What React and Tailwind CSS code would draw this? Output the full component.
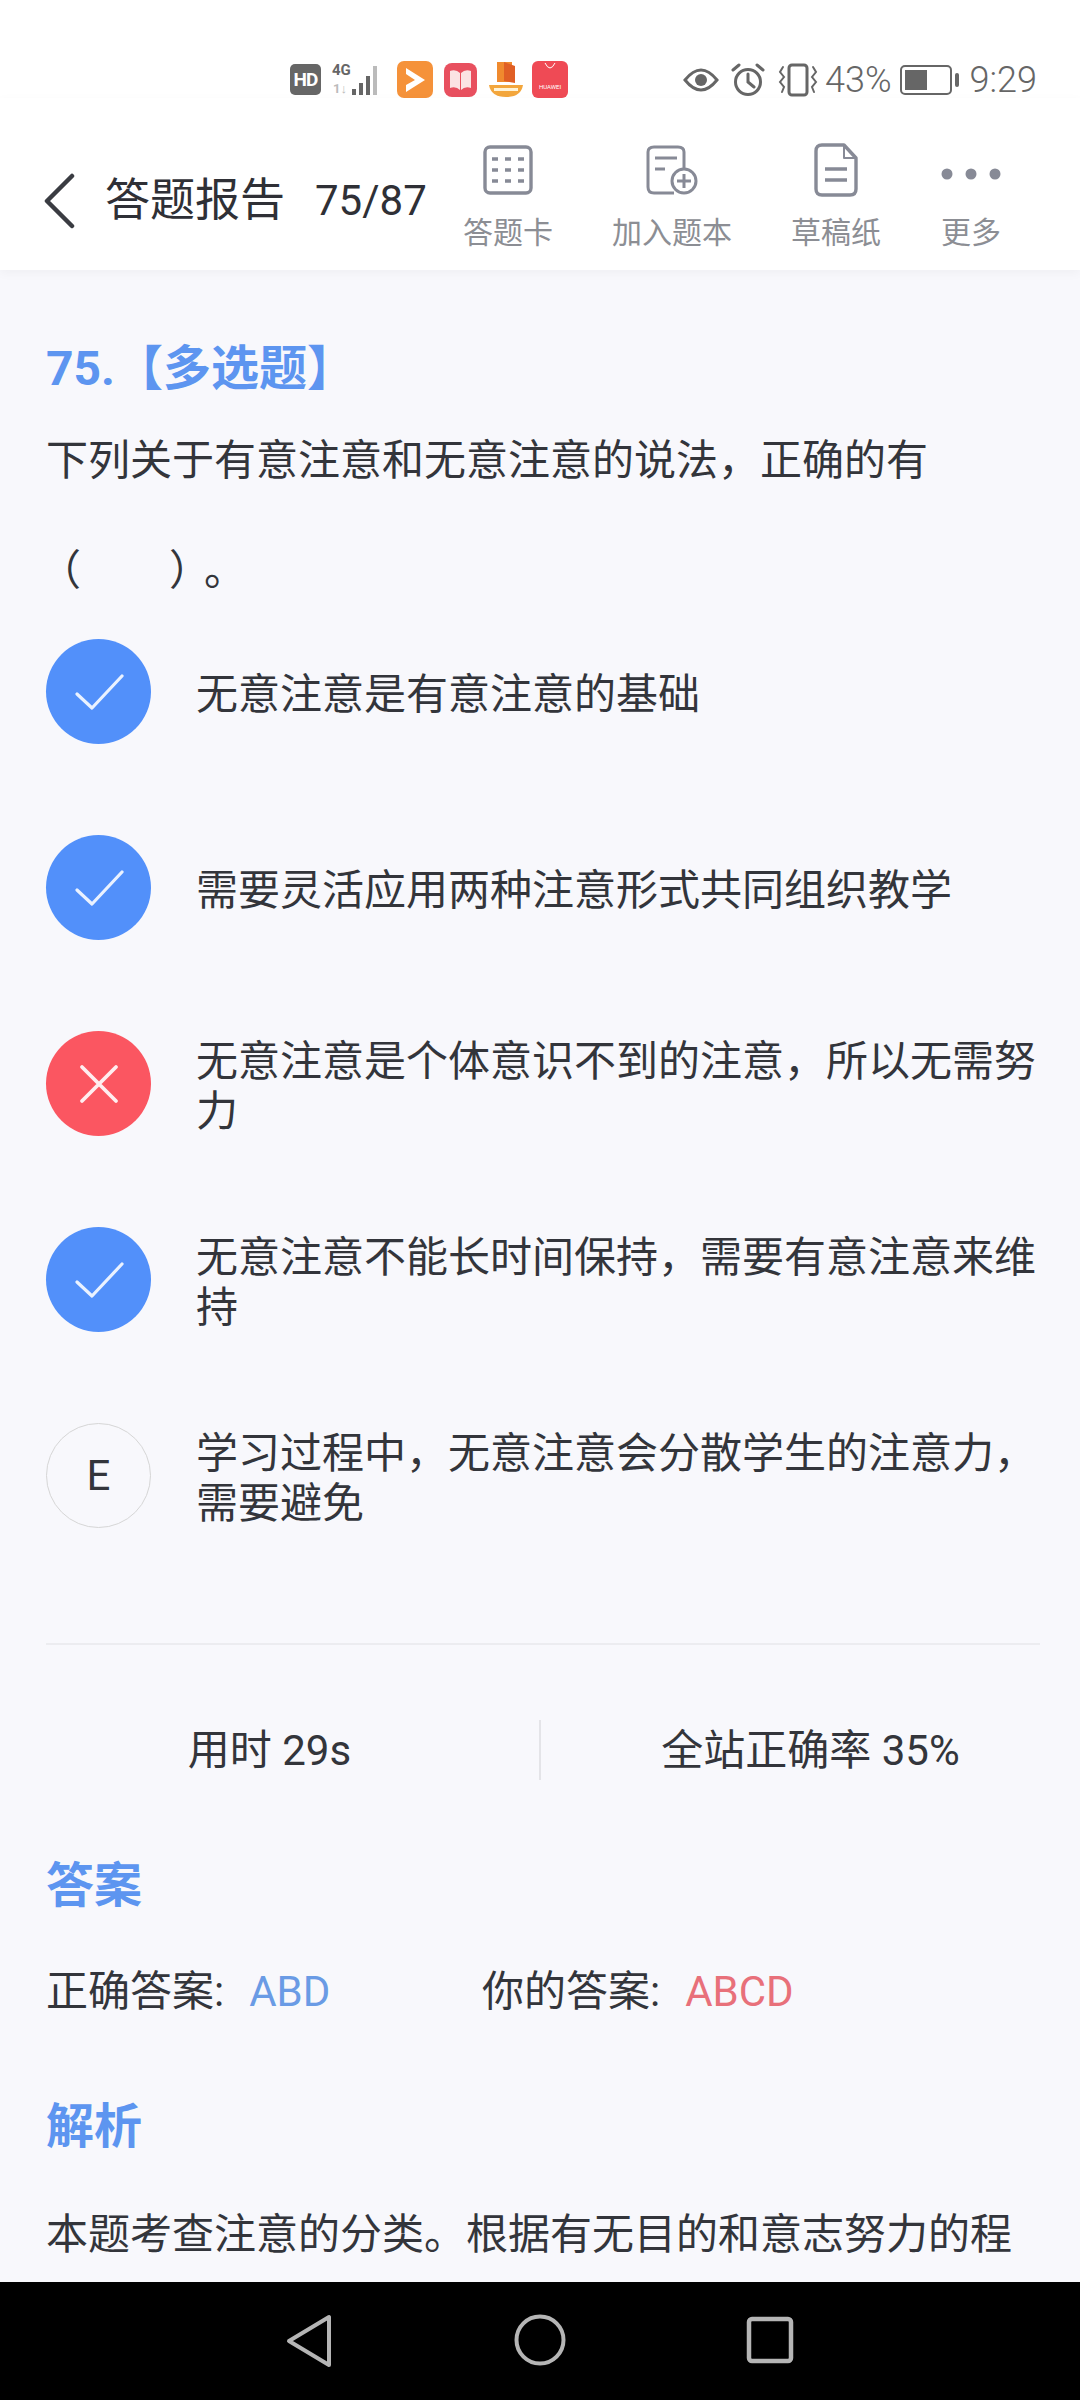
const Check = () => (
  <svg width="50" height="40" viewBox="0 0 50 40" fill="none" stroke="#eaf2ff" strokeWidth="3.2" strokeLinecap="round" strokeLinejoin="round">
    <path d="M3 22 L18 36 L48 4" />
  </svg>
);
const Cross = () => (
  <svg width="40" height="40" viewBox="0 0 40 40" fill="none" stroke="#ffeef0" strokeWidth="3.8" strokeLinecap="round">
    <path d="M3 3 L37 37 M37 3 L3 37" />
  </svg>
);

const options = [
  { kind: "ok", text: "无意注意是有意注意的基础" },
  { kind: "ok", text: "需要灵活应用两种注意形式共同组织教学" },
  { kind: "bad", text: "无意注意是个体意识不到的注意，所以无需努力" },
  { kind: "ok", text: "无意注意不能长时间保持，需要有意注意来维持" },
  { kind: "none", text: "学习过程中，无意注意会分散学生的注意力，需要避免" },
];

function StatusBar() {
  return (
    <div className="h-[98px] pt-[61px] flex items-start bg-white pl-[290px] pr-[43px] text-[#666666]">
      <div className="flex items-center h-[37px]">
        <div className="w-[31px] h-[31px] rounded-[5px] bg-[#666666] flex items-center justify-center text-white text-[19px] font-bold leading-none tracking-[-1px]">HD</div>
        <svg className="ml-[11px]" width="54" height="36" viewBox="0 0 54 36">
          <text x="0" y="13" fontSize="15" fontWeight="700" fill="#666" fontFamily="Roboto, sans-serif">4G</text>
          <text x="1" y="31" fontSize="13" fontWeight="700" fill="#bbb" fontFamily="Roboto, sans-serif">1↓</text>
          <rect x="20" y="27" width="4" height="6" fill="#666" />
          <rect x="27" y="21" width="4" height="12" fill="#666" />
          <rect x="34" y="14" width="4" height="19" fill="#666" />
          <rect x="41" y="4" width="4" height="29" fill="#bbb" />
        </svg>
        <svg className="ml-[11px]" width="36" height="37" viewBox="0 0 36 37">
          <rect width="36" height="37" rx="7" fill="#f5923a" />
          <path d="M9 7 L28 19 L9 31 L9 24 L18 19 L9 13 Z" fill="#fff" />
        </svg>
        <svg className="ml-[11px]" width="33" height="34" viewBox="0 0 33 34">
          <rect width="33" height="34" rx="8" fill="#e8505f" />
          <path d="M6 8 Q12 6 16 10 L16 27 Q12 23 6 25 Z M27 8 Q21 6 17 10 L17 27 Q21 23 27 25 Z" fill="#fbe3e3" />
        </svg>
        <svg className="ml-[12px]" width="34" height="37" viewBox="0 0 34 37">
          <rect x="8" y="1" width="15" height="20" fill="#f08a2e" />
          <path d="M15 1 L26 5 L26 22 L15 20 Z" fill="#e05f25" />
          <path d="M0 24 L34 24 Q32 36 17 36 Q2 36 0 24 Z" fill="#f3a63c" />
          <rect x="5" y="27" width="24" height="3" fill="#fff3d6" />
        </svg>
        <div className="ml-[9px] w-[36px] h-[37px] rounded-[6px] bg-[#ef4a55] flex flex-col items-center justify-end pb-[8px] text-white text-[6px] leading-none relative">
          <svg className="absolute top-0" width="14" height="10" viewBox="0 0 14 10" fill="none" stroke="#fff" strokeWidth="1">
            <path d="M2 2 Q7 12 12 2" />
          </svg>
          <span>HUAWEI</span>
        </div>
      </div>
      <div className="ml-auto flex items-center h-[37px]">
        <svg width="36" height="26" viewBox="0 0 36 26" fill="none" stroke="#666" strokeWidth="3">
          <path d="M2 13 Q18 -7 34 13 Q18 33 2 13 Z" />
          <circle cx="18" cy="13" r="6" fill="#666" stroke="none" />
        </svg>
        <svg className="ml-[12px]" width="34" height="34" viewBox="0 0 34 34" fill="none" stroke="#666" strokeWidth="3" strokeLinecap="round">
          <circle cx="17" cy="19" r="12.5" />
          <path d="M17 11 V19 L23 24 M2 7 L8 2 M32 7 L26 2" />
        </svg>
        <svg className="ml-[13px]" width="40" height="34" viewBox="0 0 40 34" fill="none" stroke="#666" strokeWidth="3" strokeLinecap="round">
          <rect x="11" y="2" width="18" height="30" rx="3" />
          <path d="M5 4 L2 9 L6 14 L2 19 L6 24 L4 29 M35 4 L38 9 L34 14 L38 19 L34 24 L36 29" strokeWidth="2" />
        </svg>
        <span className="ml-[7px] text-[36px] leading-none font-light">43%</span>
        <svg className="ml-[8px]" width="60" height="30" viewBox="0 0 60 30">
          <rect x="1" y="1" width="50" height="28" rx="4" fill="none" stroke="#666" strokeWidth="2" />
          <rect x="5" y="5" width="22" height="20" fill="#666" />
          <rect x="55" y="8" width="4" height="14" rx="2" fill="#666" />
        </svg>
        <span className="ml-[10px] text-[36px] leading-none font-light">9:29</span>
      </div>
    </div>
  );
}

function Tool({ icon, label }) {
  return (
    <div className="flex flex-col items-center">
      <div className="h-[56px] flex items-center justify-center">{icon}</div>
      <div className="mt-[18px] text-[30px] leading-[34px] text-[#8c8e94]">{label}</div>
    </div>
  );
}

function Header() {
  return (
    <div className="relative z-10 h-[172px] bg-white flex items-start justify-between pl-[43px] pr-[78px] shadow-[0_3px_10px_rgba(0,0,0,0.04)]">
      <div className="flex items-center mt-[73px]">
        <svg width="32" height="56" viewBox="0 0 32 56" fill="none" stroke="#3a3c42" strokeWidth="4.5" strokeLinecap="round" strokeLinejoin="round">
          <path d="M29 3 L4 28 L29 53" />
        </svg>
        <span className="ml-[30px] text-[45px] leading-[60px] text-[#2f3036]">答题报告</span>
        <span className="ml-[30px] text-[42px] leading-[60px] text-[#2f3036]">75/87</span>
      </div>
      <div className="flex items-start gap-[59px] mt-[44px]">
        <Tool
          label="答题卡"
          icon={
            <svg width="50" height="50" viewBox="0 0 50 50" fill="none" stroke="#878a96" strokeWidth="3.4">
              <rect x="2" y="2" width="46" height="46" rx="5" />
              <path d="M9 14 H15 M22 14 H28 M35 14 H41 M9 25 H15 M22 25 H28 M35 25 H41 M9 36 H15 M22 36 H28 M35 36 H41" />
            </svg>
          }
        />
        <Tool
          label="加入题本"
          icon={
            <svg width="52" height="50" viewBox="0 0 52 50" fill="none" stroke="#878a96" strokeWidth="3">
              <path d="M28 48 H8 Q2 48 2 42 V7 Q2 2 8 2 H32 Q38 2 38 7 V24" />
              <path d="M9 13 H31 M9 24 H19" />
              <circle cx="38" cy="36" r="12" />
              <path d="M38 29 V43 M31 36 H45" />
            </svg>
          }
        />
        <Tool
          label="草稿纸"
          icon={
            <svg width="44" height="54" viewBox="0 0 44 54" fill="none" stroke="#878a96" strokeWidth="3.4" strokeLinejoin="round">
              <path d="M8 2 H30 L42 15 V46 Q42 52 36 52 H8 Q2 52 2 46 V8 Q2 2 8 2 Z" />
              <path d="M30 2 V15 H42" strokeWidth="2" />
              <path d="M11 26 H33 M11 37 H33" />
            </svg>
          }
        />
        <Tool
          label="更多"
          icon={
            <svg className="mt-[8px]" width="62" height="14" viewBox="0 0 62 14" fill="#878a96">
              <circle cx="7" cy="7" r="5.5" />
              <circle cx="31" cy="7" r="5.5" />
              <circle cx="55" cy="7" r="5.5" />
            </svg>
          }
        />
      </div>
    </div>
  );
}

function Option({ kind, text }) {
  const mark =
    kind === "ok" ? (
      <div className="w-[105px] h-[105px] rounded-full bg-[#5290fa] flex items-center justify-center"><Check /></div>
    ) : kind === "bad" ? (
      <div className="w-[105px] h-[105px] rounded-full bg-[#fb5661] flex items-center justify-center"><Cross /></div>
    ) : (
      <div className="w-[105px] h-[105px] rounded-full border-[1.5px] border-[#d6d6d6] flex items-center justify-center text-[42px] text-[#33353b]">E</div>
    );
  return (
    <div className="flex items-center h-[105px]">
      <div className="shrink-0">{mark}</div>
      <div className="ml-[45px] pt-[6px] flex-1 text-[42px] leading-[50px] text-[#33353b]">{text}</div>
    </div>
  );
}

export default function App() {
  return (
    <div
      className="w-[1080px] h-[2400px] flex flex-col overflow-hidden bg-[#f8f8fc]"
      style={{ fontFamily: 'Roboto, "Noto Sans CJK SC", sans-serif' }}
    >
      <StatusBar />
      <Header />
      <main className="flex-1 overflow-hidden pl-[46px] pr-[38px]">
        <h1 className="mt-[66px] text-[48px] leading-[66px] font-bold text-[#5d95f0]">75.【多选题】</h1>
        <p className="mt-[34px] text-[42px] leading-[50px] text-[#33353b]">下列关于有意注意和无意注意的说法，正确的有</p>
        <p className="mt-[60px] -ml-[7px] text-[42px] leading-[50px] text-[#33353b]">（<span className="inline-block w-[88px]" />）<span className="ml-[14px]">。</span></p>
        <div className="mt-[43px] flex flex-col gap-[91px]">
          {options.map((o) => (
            <Option key={o.text} {...o} />
          ))}
        </div>
        <div className="mt-[115px] h-[2px] bg-[#ececf0] w-[994px]" />
        <div className="mt-[74px] -ml-[46px] w-[1080px] flex items-center h-[62px] text-[42px] text-[#33353b]">
          <div className="flex-1 text-center">用时 29s</div>
          <div className="w-[2px] h-[60px] bg-[#e4e4e8]" />
          <div className="flex-1 text-center">全站正确率 35%</div>
        </div>
        <h2 className="mt-[72px] text-[48px] leading-[66px] font-bold text-[#5d95f0]">答案</h2>
        <div className="mt-[48px] flex items-center text-[42px] leading-[50px] text-[#33353b]">
          <div className="w-[436px] flex items-center">
            <span>正确答案:</span>
            <span className="ml-[25px] text-[#6a9be5]">ABD</span>
          </div>
          <div className="flex items-center">
            <span>你的答案:</span>
            <span className="ml-[25px] text-[#e8707a]">ABCD</span>
          </div>
        </div>
        <h2 className="mt-[77px] text-[48px] leading-[66px] font-bold text-[#5d95f0]">解析</h2>
        <p className="mt-[50px] text-[42px] leading-[50px] text-[#33353b] whitespace-nowrap">本题考查注意的分类。根据有无目的和意志努力的程</p>
      </main>
      <nav className="h-[118px] shrink-0 bg-black relative">
        <svg className="absolute left-[286px] top-[32px]" width="46" height="54" viewBox="0 0 46 54" fill="none" stroke="#b5b5b5" strokeWidth="4" strokeLinejoin="round">
          <path d="M43 3 V51 L3 27 Z" />
        </svg>
        <svg className="absolute left-[514px] top-[32px]" width="52" height="52" viewBox="0 0 52 52" fill="none" stroke="#b5b5b5" strokeWidth="4">
          <circle cx="26" cy="26" r="23.5" />
        </svg>
        <svg className="absolute left-[746px] top-[34px]" width="48" height="48" viewBox="0 0 48 48" fill="none" stroke="#b5b5b5" strokeWidth="4.5">
          <rect x="3" y="3" width="42" height="42" rx="3" />
        </svg>
      </nav>
    </div>
  );
}
